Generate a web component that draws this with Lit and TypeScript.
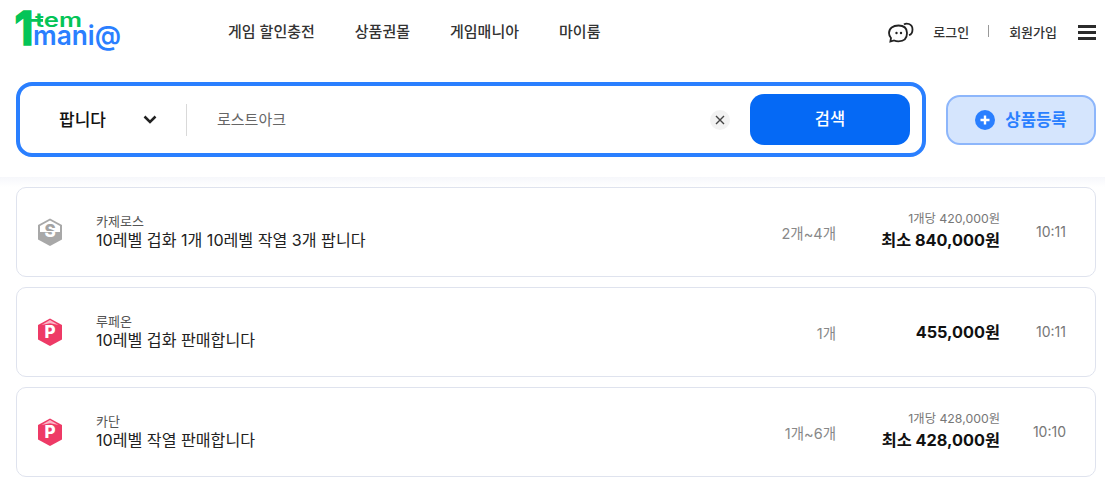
import { LitElement, css, html, svg } from "lit";
import { customElement } from "lit/decorators.js";

type Item = {
  server: string;
  title: string;
  qty: string;
  unit?: string;
  price: string;
  time: string;
  badge: "s" | "p";
};

const items: Item[] = [
  { server: "카제로스", title: "10레벨 겁화 1개 10레벨 작열 3개 팝니다", qty: "2개~4개", unit: "1개당 420,000원", price: "최소 840,000원", time: "10:11", badge: "s" },
  { server: "루페온", title: "10레벨 겁화 판매합니다", qty: "1개", price: "455,000원", time: "10:11", badge: "p" },
  { server: "카단", title: "10레벨 작열 판매합니다", qty: "1개~6개", unit: "1개당 428,000원", price: "최소 428,000원", time: "10:10", badge: "p" },
];

const menus = ["게임 할인충전", "상품권몰", "게임매니아", "마이룸"];

@customElement("app-root")
export class AppRoot extends LitElement {
  private badge(kind: "s" | "p") {
    if (kind === "s") {
      return html`
        <svg class="badge" width="26" height="30" viewBox="0 0 26 30">
          <defs>
            <linearGradient id="half" x1="0" y1="0" x2="0" y2="1">
              <stop offset="0.5" stop-color="#a3a3a3" />
              <stop offset="0.5" stop-color="#ffffff" />
            </linearGradient>
          </defs>
          <path d="M13 1.500 25 8v14.500L13 29 1 22.500V8z" fill="#a8a8a8" />
          <path d="M13 3.500 23 9v6H3V9z" fill="#fff" />
          <text x="13" y="20" text-anchor="middle" class="badge-text" fill="url(#half)">S</text>
        </svg>
      `;
    }
    return html`
      <svg class="badge" width="26" height="30" viewBox="0 0 26 30">
        <path d="M13 1.500 25 8v14.500L13 29 1 22.500V8z" fill="#ee3a66" />
        <path d="M13 3 21.500 8 13 6.200 4.500 8z" fill="#fbb6c7" />
        <text x="13" y="21" text-anchor="middle" class="badge-text" fill="#fff">P</text>
      </svg>
    `;
  }

  private logo() {
    return svg`
      <text class="lg" x="14.500" y="45" font-size="47" font-weight="700" fill="#04c457" stroke="#04c457" stroke-width="1.600" textLength="19" lengthAdjust="spacingAndGlyphs">1</text>
      <rect x="31" y="19" width="12" height="2.800" fill="#04c457" />
      <text class="lg" x="35" y="27" font-size="19" font-weight="600" fill="#04c457" textLength="47" lengthAdjust="spacingAndGlyphs">tem</text>
      <text class="lg" x="33" y="45" font-size="27" font-weight="600" fill="#2a7fff" textLength="88" lengthAdjust="spacingAndGlyphs">mani@</text>
    `;
  }

  render() {
    return html`
      <header class="top">
        <a class="logo">
          <svg width="140" height="62" viewBox="0 0 140 62">${this.logo()}</svg>
        </a>
        <nav class="menu">${menus.map((m) => html`<a>${m}</a>`)}</nav>
        <div class="util">
          <svg class="chat" width="26" height="21" viewBox="0 0 26 21" fill="none" stroke="#222" stroke-width="1.800">
            <path d="M16 2.500C18 .8 24.500 1.200 24.500 7.500c0 3.200-1.300 5-3.500 5.700" />
            <path d="M10.500 3.500C5 3.500 1 6.200 1 11c0 2 .8 3.700 2 5l-.6 3.500 3.700-1c1.400.6 3 .8 4.400.8 5.500 0 8.500-3 8.500-8.300S16 3.500 10.500 3.500z" />
            <circle cx="8.500" cy="11" r="1.200" fill="#222" stroke="none" />
            <circle cx="13" cy="11" r="1.200" fill="#222" stroke="none" />
          </svg>
          <a class="login">로그인</a>
          <span class="bar"></span>
          <a class="join">회원가입</a>
          <span class="burger"><i></i><i></i><i></i></span>
        </div>
      </header>

      <section class="search-row">
        <div class="search">
          <div class="type">
            <span class="type-label">팝니다</span>
            <svg width="14" height="9" viewBox="0 0 14 9" fill="none" stroke="#222" stroke-width="2.500"><path d="M1.500 1.500 7 7l5.500-5.500" /></svg>
          </div>
          <span class="divider"></span>
          <div class="query">로스트아크</div>
          <span class="clear">
            <svg width="10" height="10" viewBox="0 0 10 10" stroke="#444" stroke-width="1.400"><path d="M1 1l8 8M9 1 1 9" /></svg>
          </span>
          <button class="go">검색</button>
        </div>
        <button class="add">
          <svg width="20" height="20" viewBox="0 0 20 20">
            <circle cx="10" cy="10" r="10" fill="#2a7fff" />
            <path d="M10 5.500v9M5.500 10h9" stroke="#fff" stroke-width="2.400" />
          </svg>
          <span class="add-label">상품등록</span>
        </button>
      </section>

      <main class="list">
        ${items.map(
          (it) => html`
            <article class="card">
              ${this.badge(it.badge)}
              <div class="info">
                <div class="server">${it.server}</div>
                <div class="title">${it.title}</div>
              </div>
              <div class="qty">${it.qty}</div>
              <div class="pricing">
                ${it.unit ? html`<div class="unit">${it.unit}</div>` : ""}
                <div class="price">${it.price}</div>
              </div>
              <div class="time">${it.time}</div>
            </article>
          `
        )}
      </main>
    `;
  }

  static styles = css`
    :host {
      display: block;
      height: 483px;
      overflow: hidden;
      background: #fff;
      font-family: Inter, "Noto Sans CJK KR", sans-serif;
      color: #222;
    }

    .top {
      display: flex;
      align-items: center;
      height: 62px;
      padding: 0 9px 0 0;
    }

    .logo {
      display: flex;
      width: 228px;
      height: 62px;
    }
    .lg {
      font-family: Inter, sans-serif;
    }

    .menu {
      display: flex;
      gap: 40px;
      font-size: 15px;
      font-weight: 500;
      color: #333;
      margin-top: -2px;
    }

    .util {
      display: flex;
      align-items: center;
      margin-left: auto;
      font-size: 13px;
      font-weight: 500;
      color: #333;
    }
    .chat {
      margin-right: 19px;
      margin-top: 2px;
    }
    .bar {
      width: 1px;
      height: 12px;
      background: #999;
      margin: 0 20px 0 19px;
    }
    .burger {
      display: flex;
      flex-direction: column;
      gap: 3px;
      margin-left: 21px;
      margin-top: 3px;
    }
    .burger i {
      display: block;
      width: 18px;
      height: 3px;
      background: #2b2b2b;
    }

    .search-row {
      display: flex;
      align-items: center;
      gap: 20px;
      padding: 20px 9px 20px 16px;
    }
    .search {
      box-sizing: border-box;
      display: flex;
      align-items: center;
      width: 910px;
      height: 75px;
      border: 4px solid #2a7fff;
      border-radius: 16px;
      padding: 0 12px 0 39px;
    }
    .type {
      display: flex;
      align-items: center;
      justify-content: space-between;
      width: 98px;
      font-size: 17px;
      font-weight: 500;
      color: #111;
    }
    .type-label {
      margin-top: -2px;
    }
    .divider {
      width: 1px;
      height: 32px;
      background: #d9d9d9;
      margin: 0 30px 0 29px;
    }
    .query {
      flex: 1;
      font-size: 15px;
      color: #666;
      margin-top: -2px;
    }
    .clear {
      display: flex;
      align-items: center;
      justify-content: center;
      width: 20px;
      height: 20px;
      border-radius: 50%;
      background: #f2f2f2;
      margin-right: 20px;
    }
    .go {
      width: 160px;
      height: 51px;
      border: 0;
      border-radius: 14px;
      background: #0569f5;
      color: #fff;
      font: 500 16.500px Inter, "Noto Sans CJK KR", sans-serif;
      padding-bottom: 4px;
    }
    .add {
      box-sizing: border-box;
      display: flex;
      align-items: center;
      justify-content: center;
      gap: 10px;
      width: 150px;
      height: 50px;
      border: 2px solid #8db6fb;
      border-radius: 14px;
      background: #d5e5fd;
      color: #2a7fff;
      font: 700 16.700px Inter, "Noto Sans CJK KR", sans-serif;
    }
    .add-label {
      margin-top: -2px;
    }

    .list {
      display: flex;
      flex-direction: column;
      gap: 10px;
      padding: 10px 9px 0 16px;
      background: linear-gradient(#f6f7fb, #fff 10px);
    }
    .card {
      box-sizing: border-box;
      display: flex;
      align-items: center;
      height: 90px;
      border: 1px solid #dfe3ee;
      border-radius: 10px;
      padding: 0 29px 0 20px;
      background: #fff;
    }
    .badge {
      flex: none;
      margin-right: 33px;
    }
    .badge-text {
      font: 800 17px Inter, sans-serif;
    }
    .info {
      flex: 1;
      padding-bottom: 4px;
    }
    .server {
      font-size: 13px;
      line-height: 16px;
      color: #555;
      margin-top: 2px;
      margin-bottom: 1px;
    }
    .title {
      font-size: 16.100px;
      line-height: 20px;
      color: #222;
    }
    .qty {
      font-size: 14.500px;
      color: #888;
      text-align: right;
    }
    .pricing {
      width: 164px;
      text-align: right;
    }
    .unit {
      font-size: 12.300px;
      line-height: 16px;
      color: #777;
      margin-top: 1px;
    }
    .price {
      font-size: 16.300px;
      line-height: 26px;
      font-weight: 700;
      color: #111;
      margin-bottom: 1px;
    }
    .time {
      width: 66px;
      text-align: right;
      font-size: 14px;
      color: #777;
      margin-top: -2px;
    }
  `;
}
